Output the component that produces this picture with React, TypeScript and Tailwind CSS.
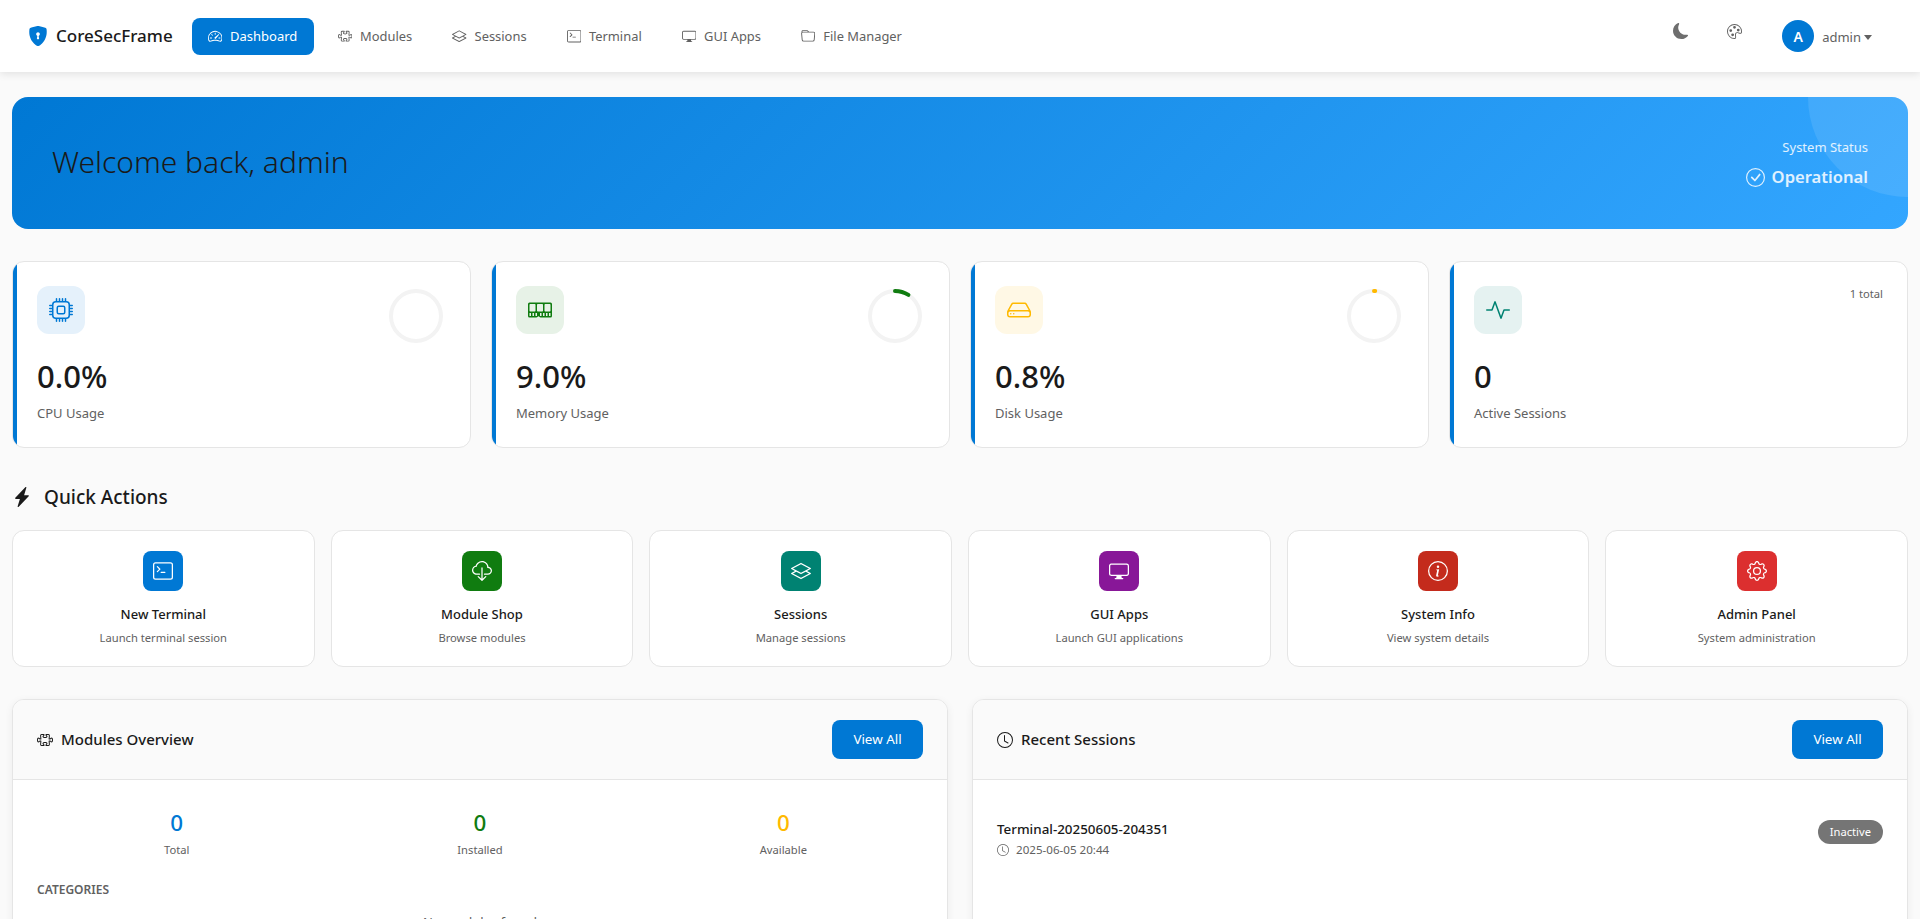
import React from "react";
import {
  BsShieldLockFill, BsSpeedometer2, BsPuzzle, BsLayers, BsTerminal, BsDisplay, BsFolder, BsMoonFill, BsPalette,
  BsCpu, BsMemory, BsHdd, BsActivity, BsLightningChargeFill, BsCloudDownload, BsInfoCircle, BsGear,
  BsClock, BsCheckCircle,
} from "react-icons/bs";

const font = "font-['Noto_Sans','Open_Sans',sans-serif]";

function Ring({ pct, color }: { pct: number; color: string }) {
  const r = 25;
  const c = 2 * Math.PI * r;
  return (
    <svg width="60" height="60" viewBox="0 0 60 60" className="-rotate-90">
      <circle cx="30" cy="30" r={r} fill="none" stroke="#f3f3f3" strokeWidth="4" />
      {pct > 0 && (
        <circle cx="30" cy="30" r={r} fill="none" stroke={color} strokeWidth="4" strokeLinecap="round" strokeDasharray={`${(c * pct) / 100} ${c}`} />
      )}
    </svg>
  );
}

const nav = [
  { label: "Modules", Icon: BsPuzzle },
  { label: "Sessions", Icon: BsLayers },
  { label: "Terminal", Icon: BsTerminal },
  { label: "GUI Apps", Icon: BsDisplay },
  { label: "File Manager", Icon: BsFolder },
];

const stats = [
  { value: "0.0%", label: "CPU Usage", Icon: BsCpu, color: "#0078d4", bg: "#e5f1fb", pct: 0 },
  { value: "9.0%", label: "Memory Usage", Icon: BsMemory, color: "#107c10", bg: "#e7f2e7", pct: 9 },
  { value: "0.8%", label: "Disk Usage", Icon: BsHdd, color: "#ffb900", bg: "#fff8e5", pct: 0.8 },
  { value: "0", label: "Active Sessions", Icon: BsActivity, color: "#008272", bg: "#e5f2f1", pct: -1 },
];

const actions = [
  { title: "New Terminal", sub: "Launch terminal session", Icon: BsTerminal, bg: "#0078d4" },
  { title: "Module Shop", sub: "Browse modules", Icon: BsCloudDownload, bg: "#107c10" },
  { title: "Sessions", sub: "Manage sessions", Icon: BsLayers, bg: "#008272" },
  { title: "GUI Apps", sub: "Launch GUI applications", Icon: BsDisplay, bg: "#881798" },
  { title: "System Info", sub: "View system details", Icon: BsInfoCircle, bg: "#c42b1c" },
  { title: "Admin Panel", sub: "System administration", Icon: BsGear, bg: "#dc2f2f" },
];

function PanelHeader({ title, Icon }: { title: string; Icon: React.ComponentType<{ className?: string }> }) {
  return (
    <div className="flex h-[80px] items-center justify-between border-b border-[#e5e5e5] bg-[#fafafa] px-6">
      <div className="flex items-center gap-2 text-[15px] font-medium text-[#1a1a1a]">
        <Icon className="h-4 w-4" />
        <span>{title}</span>
      </div>
      <button className="h-[39px] w-[91px] rounded-lg bg-[#0078d4] text-[13.4px] text-white">View All</button>
    </div>
  );
}

export default function App() {
  return (
    <div className={`h-screen overflow-hidden bg-[#fafafa] ${font} text-[#1a1a1a]`}>
      <header className="relative z-10 flex h-[72px] items-center bg-white pl-[28px] pr-[48px] shadow-[0_2px_8px_rgba(0,0,0,0.1)]">
        <div className="flex items-center gap-2">
          <BsShieldLockFill className="h-5 w-5 text-[#0078d4]" />
          <span className="text-[17px] font-medium">CoreSecFrame</span>
        </div>
        <nav className="ml-[19px] mt-[1px] flex items-center gap-2 text-[12.9px] text-[#616161]">
          <a className="flex h-[37px] w-[122px] items-center gap-2 rounded-lg bg-[#0078d4] px-4 text-[13px] text-white">
            <BsSpeedometer2 className="h-[14.4px] w-[14.4px]" />
            Dashboard
          </a>
          {nav.map(({ label, Icon }) => (
            <a key={label} className="flex h-[37px] items-center gap-2 px-4">
              <Icon className="h-[14.4px] w-[14.4px]" />
              {label}
            </a>
          ))}
        </nav>
        <div className="ml-auto flex items-center text-[#616161]">
          <BsMoonFill className="mb-[10px] h-4 w-4 text-[#6e6e6e]" />
          <BsPalette className="mb-[10px] ml-[38px] h-[15px] w-[15px]" />
          <div className="ml-[40px] flex h-8 w-8 items-center justify-center rounded-full bg-[#0078d4] text-[14px] font-semibold text-white">A</div>
          <span className="ml-2 mt-[3px] text-[13px]">admin</span>
          <span className="ml-[3px] mt-[3px] h-0 w-0 border-x-[4px] border-t-[5px] border-x-transparent border-t-[#616161]" />
        </div>
      </header>

      <main className="px-3 pt-[25px]">
        <section className="relative flex h-[132px] items-center justify-between overflow-hidden rounded-2xl bg-[linear-gradient(135deg,#0078d4,#33a6ff)] px-10">
          <div className="absolute -right-[100px] -top-[100px] h-[200px] w-[200px] rounded-full bg-white/10" />
          <h1 className="pb-[4px] text-[30px] font-light">Welcome back, admin</h1>
          <div className="relative pt-[2px] text-right text-white/85">
            <div className="text-[13px]">System Status</div>
            <div className="mt-[7px] flex items-center justify-end gap-[7px] text-[16.6px] font-semibold">
              <BsCheckCircle className="h-[19px] w-[19px]" />
              Operational
            </div>
          </div>
        </section>

        <section className="mt-8 grid grid-cols-4 gap-5">
          {stats.map(({ value, label, Icon, color, bg, pct }) => (
            <div key={label} className="relative h-[187px] overflow-hidden rounded-xl border border-[#e5e5e5] bg-white p-6">
              <div className="absolute inset-y-0 left-0 w-1 bg-[#0078d4]" />
              <div className="flex items-start justify-between">
                <div className="flex h-12 w-12 items-center justify-center rounded-xl" style={{ backgroundColor: bg, color }}>
                  <Icon className="h-6 w-6" />
                </div>
                {pct >= 0 ? <Ring pct={pct} color={color} /> : <span className="text-[11.2px] text-[#616161]">1 total</span>}
              </div>
              <div className={`${pct >= 0 ? "mt-[10px]" : "mt-[22px]"} text-[31px] font-medium leading-[40px]`}>{value}</div>
              <div className="mt-[8px] text-[13px] text-[#616161]">{label}</div>
            </div>
          ))}
        </section>

        <h2 className="mt-[35px] flex items-center gap-3 text-[19px] font-medium leading-[28px]">
          <BsLightningChargeFill className="h-5 w-5" />
          Quick Actions
        </h2>

        <section className="mt-[19px] grid grid-cols-6 gap-4">
          {actions.map(({ title, sub, Icon, bg }) => (
            <div key={title} className="flex h-[137px] flex-col items-center rounded-xl border border-[#e5e5e5] bg-white pt-5">
              <div className="flex h-10 w-10 items-center justify-center rounded-lg text-white" style={{ backgroundColor: bg }}>
                <Icon className="h-5 w-5" />
              </div>
              <div className="mt-[12px] text-[13px] font-medium leading-[22px]">{title}</div>
              <div className="mt-[4px] text-[11.2px] leading-[18px] text-[#616161]">{sub}</div>
            </div>
          ))}
        </section>

        <section className="mt-8 grid grid-cols-2 gap-6">
          <div className="overflow-hidden rounded-xl border border-[#e5e5e5] bg-white shadow-[0_2px_8px_rgba(0,0,0,0.06)]">
            <PanelHeader title="Modules Overview" Icon={BsPuzzle} />
            <div className="h-[400px] px-6 pt-[25px]">
              <div className="-mx-3 grid grid-cols-3 text-center">
                <div>
                  <div className="text-[22.4px] font-medium leading-[36px] text-[#0078d4]">0</div>
                  <div className="text-[11.2px] leading-[18px] text-[#616161]">Total</div>
                </div>
                <div>
                  <div className="text-[22.4px] font-medium leading-[36px] text-[#107c10]">0</div>
                  <div className="text-[11.2px] leading-[18px] text-[#616161]">Installed</div>
                </div>
                <div>
                  <div className="text-[22.4px] font-medium leading-[36px] text-[#ffb900]">0</div>
                  <div className="text-[11.2px] leading-[18px] text-[#616161]">Available</div>
                </div>
              </div>
              <div className="mt-[22px] text-[12px] font-semibold uppercase leading-[18px] text-[#616161]">Categories</div>
              <div className="mt-[14px] text-center text-[13px] text-[#616161]">No modules found</div>
            </div>
          </div>
          <div className="overflow-hidden rounded-xl border border-[#e5e5e5] bg-white shadow-[0_2px_8px_rgba(0,0,0,0.06)]">
            <PanelHeader title="Recent Sessions" Icon={BsClock} />
            <div className="flex h-[400px] items-start justify-between px-6 pt-[38px]">
              <div>
                <div className="text-[13.4px] font-medium leading-[22px]">Terminal-20250605-204351</div>
                <div className="flex items-center gap-[7px] text-[11.6px] leading-[20px] text-[#616161]">
                  <BsClock className="h-3 w-3" />
                  2025-06-05 20:44
                </div>
              </div>
              <span className="mt-[2px] flex h-6 items-center rounded-full bg-[#757575] px-3 text-[11.2px] text-white">Inactive</span>
            </div>
          </div>
        </section>
      </main>
    </div>
  );
}
